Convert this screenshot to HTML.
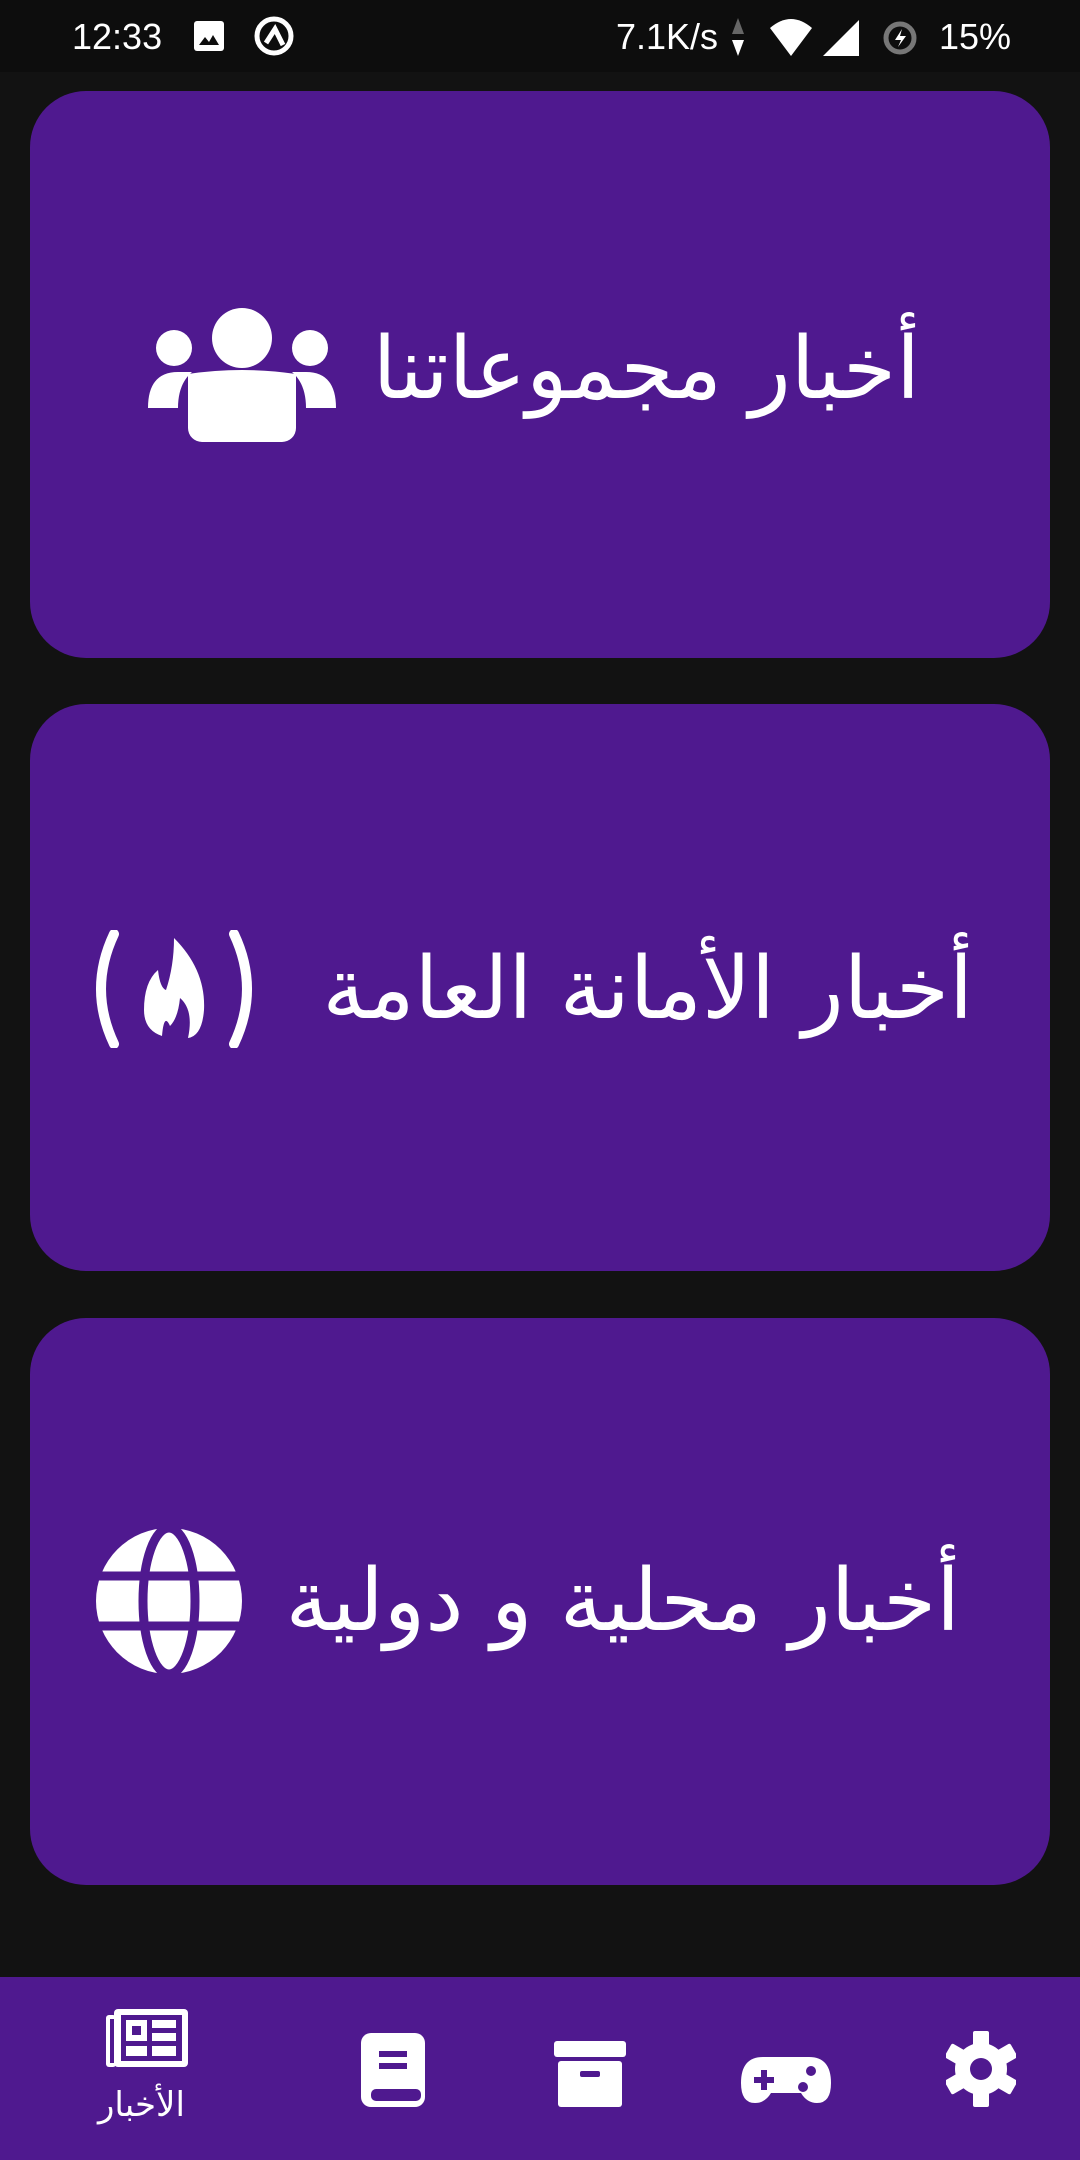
<!DOCTYPE html>
<html><head><meta charset="utf-8"><style>
*{margin:0;padding:0;box-sizing:border-box}
body{width:1080px;height:2160px;background:#121212;position:relative;overflow:hidden;font-family:"DejaVu Sans","Liberation Sans","Noto Sans CJK SC",sans-serif;color:#fff}
.sb{position:absolute;left:0;top:0;width:1080px;height:72px;background:#0d0d0d;font-family:"Liberation Sans",sans-serif;font-size:36px}
.card{position:absolute;left:30px;width:1020px;height:567px;background:#4f198f;border-radius:56px}
.t{position:absolute;direction:rtl;font-size:86px;white-space:nowrap;transform:translateY(-50%)}
.ic{position:absolute}
.nav{position:absolute;left:0;top:1977px;width:1080px;height:183px;background:#4f198f}
</style></head><body>
<div class="sb">
<span style="position:absolute;left:72px;top:16px">12:33</span>
<svg style="position:absolute;left:193px;top:20px" width="32" height="32" viewBox="0 0 32 32"><rect x="1" y="1" width="30" height="30" rx="3" fill="#fff"/><path d="M6 25 L12 17 L16 22 L20 15 L26 25Z" fill="#0d0d0d"/></svg>
<svg style="position:absolute;left:253px;top:15px" width="42" height="42" viewBox="0 0 42 42"><circle cx="21" cy="21" r="17" fill="none" stroke="#fff" stroke-width="5"/><path d="M13 28 L22 14 L30 30" fill="none" stroke="#fff" stroke-width="5"/></svg>
<span style="position:absolute;left:616px;top:16px">7.1K/s</span>
<svg style="position:absolute;left:730px;top:18px" width="16" height="38"><path d="M8 0 L14 16 H2Z" fill="#666"/><path d="M8 38 L14 22 H2Z" fill="#fff"/></svg>
<svg style="position:absolute;left:768px;top:18px" width="46" height="38"><path d="M2 10 Q23 -8 44 10 L23 38Z" fill="#fff"/></svg>
<svg style="position:absolute;left:823px;top:20px" width="38" height="38"><path d="M36 0 V36 H0Z" fill="#fff"/></svg>
<svg style="position:absolute;left:882px;top:16px" width="38" height="40" viewBox="0 0 38 40"><circle cx="18" cy="22" r="14" fill="none" stroke="#777" stroke-width="5"/><path d="M20 13 L13 24 H19 L16 31 L24 20 H18Z" fill="#fff"/></svg>
<span style="position:absolute;left:939px;top:16px">15%</span>
</div>

<div class="card" style="top:91px"></div>
<div class="t" style="right:160px;top:369px">أخبار مجموعاتنا</div>
<svg class="ic" style="left:148px;top:308px" width="188" height="134" viewBox="0 0 188 134"><circle cx="94" cy="30" r="30" fill="#fff"/><rect x="40" y="66" width="108" height="68" rx="14" fill="#fff"/><path d="M40 66 Q94 58 148 66 L148 110 H40Z" fill="#fff"/><circle cx="26" cy="40" r="18" fill="#fff"/><circle cx="162" cy="40" r="18" fill="#fff"/><path d="M0 100 Q0 64 30 64 H44 Q30 76 30 100Z" fill="#fff"/><path d="M188 100 Q188 64 158 64 H144 Q158 76 158 100Z" fill="#fff"/></svg>

<div class="card" style="top:704px"></div>
<div class="t" style="right:107px;top:989px">أخبار الأمانة العامة</div>
<svg class="ic" style="left:88px;top:930px" width="172" height="118" viewBox="0 0 172 118"><path d="M26 4 Q0 59 26 114" fill="none" stroke="#fff" stroke-width="10" stroke-linecap="round"/><path d="M146 4 Q172 59 146 114" fill="none" stroke="#fff" stroke-width="10" stroke-linecap="round"/><path d="M86 8 Q118 40 116 80 Q114 106 100 108 Q106 80 92 68 Q90 88 82 96 Q76 82 74 106 Q56 100 56 80 Q56 52 70 40 Q72 58 78 60 Q86 36 86 8Z" fill="#fff"/></svg>

<div class="card" style="top:1318px"></div>
<div class="t" style="right:120px;top:1601px">أخبار محلية و دولية</div>
<svg class="ic" style="left:96px;top:1528px" width="146" height="146" viewBox="0 0 146 146"><circle cx="73" cy="73" r="73" fill="#fff"/><g stroke="#4f198f" stroke-width="9" fill="none"><ellipse cx="73" cy="73" rx="26" ry="73"/><line x1="0" y1="48" x2="146" y2="48"/><line x1="0" y1="98" x2="146" y2="98"/></g></svg>

<div class="nav">
<svg style="position:absolute;left:106px;top:32px" width="82" height="58" viewBox="0 0 82 58"><rect x="8" y="0" width="74" height="58" rx="4" fill="#fff"/><rect x="0" y="6" width="10" height="52" rx="3" fill="#fff"/><rect x="4" y="10" width="4" height="44" fill="#4f198f"/><rect x="15" y="6" width="61" height="46" fill="#4f198f"/><rect x="20" y="11" width="21" height="21" fill="#fff"/><rect x="26" y="17" width="9" height="9" fill="#4f198f"/><rect x="46" y="11" width="24" height="8" fill="#fff"/><rect x="46" y="24" width="24" height="8" fill="#fff"/><rect x="20" y="37" width="21" height="10" fill="#fff"/><rect x="46" y="37" width="24" height="10" fill="#fff"/></svg>
<div style="position:absolute;left:98px;top:108px;font-size:34px;direction:rtl">الأخبار</div>
<svg style="position:absolute;left:361px;top:56px" width="64" height="74" viewBox="0 0 64 74"><rect x="0" y="0" width="64" height="74" rx="10" fill="#fff"/><rect x="10" y="56" width="50" height="12" rx="5" fill="#4f198f"/><rect x="18" y="18" width="28" height="6" fill="#4f198f"/><rect x="18" y="30" width="28" height="6" fill="#4f198f"/></svg>
<svg style="position:absolute;left:554px;top:64px" width="72" height="66" viewBox="0 0 72 66"><rect x="0" y="0" width="72" height="16" rx="3" fill="#fff"/><rect x="4" y="20" width="64" height="46" rx="3" fill="#fff"/><rect x="26" y="30" width="20" height="6" rx="2" fill="#4f198f"/></svg>
<svg style="position:absolute;left:741px;top:80px" width="90" height="46" viewBox="0 0 90 46"><path d="M22 0 H68 Q90 0 90 26 Q90 46 76 46 Q66 46 60 36 H30 Q24 46 14 46 Q0 46 0 26 Q0 0 22 0Z" fill="#fff"/><rect x="13" y="20" width="20" height="6" fill="#4f198f"/><rect x="20" y="13" width="6" height="20" fill="#4f198f"/><circle cx="70" cy="14" r="5" fill="#4f198f"/><circle cx="62" cy="30" r="5" fill="#4f198f"/></svg>
<svg style="position:absolute;left:946px;top:54px" width="70" height="76" viewBox="-35 -38 70 76"><g fill="#fff"><circle r="26"/><g id="tt"><rect x="-8" y="-38" width="16" height="16" rx="2"/></g><use href="#tt" transform="rotate(60)"/><use href="#tt" transform="rotate(120)"/><use href="#tt" transform="rotate(180)"/><use href="#tt" transform="rotate(240)"/><use href="#tt" transform="rotate(300)"/></g><circle r="11" fill="#4f198f"/></svg>
</div>
</body></html>
